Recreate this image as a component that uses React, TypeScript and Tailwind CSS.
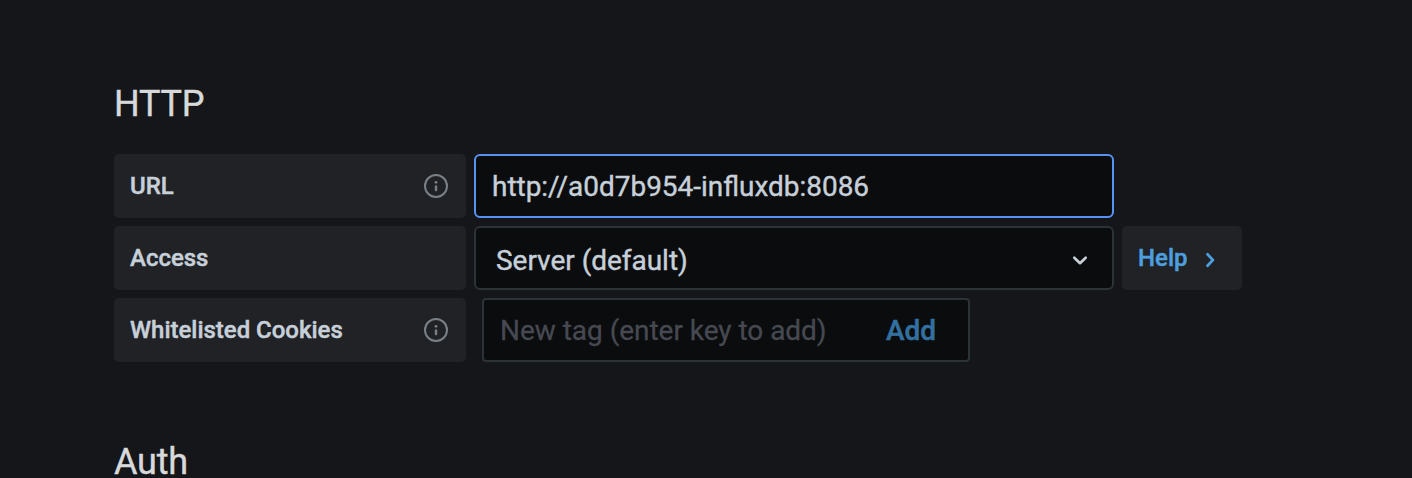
import React from "react";

function InfoIcon() {
  return (
    <svg className="h-6 w-6 shrink-0" viewBox="0 0 24 24" fill="none" stroke="#7b8087" strokeWidth="2" strokeLinecap="round">
      <circle cx="12" cy="12" r="11" />
      <path d="M12 12.5V16" strokeWidth="2.4" />
      <circle cx="12" cy="8.3" r="1.4" fill="#7b8087" stroke="none" />
    </svg>
  );
}

function Label({ text, info = false }: { text: string; info?: boolean }) {
  return (
    <div className="flex h-16 w-[352px] shrink-0 items-center justify-between rounded-[5px] bg-[#202226] pl-4 pr-[18px] text-[24px] font-medium tracking-[-0.02px] text-[#c7d0d9] [-webkit-text-stroke:0.45px]">
      <span>{text}</span>
      {info && <InfoIcon />}
    </div>
  );
}

export default function App() {
  return (
    <main className="h-[478px] w-[1412px] overflow-hidden bg-[#141619] pl-[114px] pt-[80px] font-['Roboto',sans-serif] text-[#c7d0d9]">
      <h2 className="h-[74px] text-[36px] leading-[48px] tracking-[-0.2px] text-[#d8d9da] [-webkit-text-stroke:0.4px]">HTTP</h2>
      <div className="flex flex-col gap-2">
        <div className="flex gap-2">
          <Label text="URL" info />
          <div className="flex h-16 w-[640px] items-center rounded-[6px] border-2 border-[#5794f2] bg-[#0b0c0e] pl-4 pt-0.5 text-[27.95px] [-webkit-text-stroke:0.4px]">
            http://a0d7b954-influxdb:8086
          </div>
        </div>
        <div className="flex gap-2">
          <Label text="Access" />
          <div className="flex h-16 w-[640px] items-center justify-between rounded-[6px] border-2 border-[#2c3235] bg-[#0b0c0e] pl-5 pr-6 pt-1.5 text-[28px] tracking-[-0.03px] [-webkit-text-stroke:0.4px]">
            <span>Server (default)</span>
            <svg className="mb-[3px] h-4 w-4" viewBox="0 0 16 16" fill="none" stroke="#c7d0d9" strokeWidth="2.7" strokeLinecap="round" strokeLinejoin="round">
              <path d="M2.3 5.8l5.7 5.4 5.7-5.4" />
            </svg>
          </div>
          <div className="flex h-16 w-[120px] items-center rounded-[5px] bg-[#202226] pl-4 text-[24px] font-medium text-[#4d9fdf] [-webkit-text-stroke:0.45px]">
            <span>Help</span>
            <svg className="ml-[14px] mt-1 h-4 w-4" viewBox="0 0 16 16" fill="none" stroke="currentColor" strokeWidth="2.7" strokeLinecap="round" strokeLinejoin="round">
              <path d="M5.5 2.3l5.4 5.7-5.4 5.7" />
            </svg>
          </div>
        </div>
        <div className="flex gap-4">
          <Label text="Whitelisted Cookies" info />
          <div className="flex h-16 w-[488px] items-center justify-between rounded-[4px] border-2 border-[#2c3235] bg-[#0b0c0e] pl-4 pr-8 pt-0.5 text-[28px] tracking-[-0.03px]">
            <span className="text-[#464951] [-webkit-text-stroke:0.3px]">New tag (enter key to add)</span>
            <span className="font-medium text-[#34709f] [-webkit-text-stroke:0.5px]">Add</span>
          </div>
        </div>
      </div>
      <h2 className="mt-[76px] text-[36px] leading-[48px] tracking-[-0.2px] text-[#d8d9da] [-webkit-text-stroke:0.4px]">Auth</h2>
    </main>
  );
}
